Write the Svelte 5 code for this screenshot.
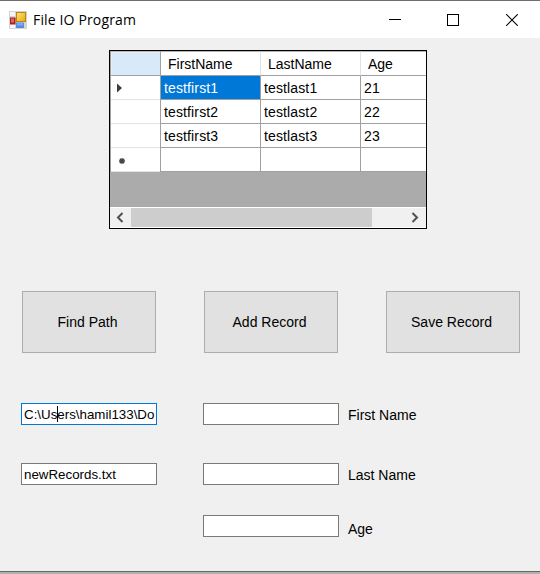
<script>
  const columns = ['FirstName', 'LastName', 'Age'];
  const records = [
    ['testfirst1', 'testlast1', '21'],
    ['testfirst2', 'testlast2', '22'],
    ['testfirst3', 'testlast3', '23'],
    ['', '', '']
  ];
  const actions = ['Find Path', 'Add Record', 'Save Record'];
</script>

<main class="window">
  <header class="titlebar">
    <svg class="logo" width="18" height="18" viewBox="0 0 18 18">
      <defs>
        <linearGradient id="gold" x1="0" y1="0" x2="1" y2="1"><stop offset="0" stop-color="#ffe487" /><stop offset="1" stop-color="#e8a800" /></linearGradient>
        <linearGradient id="blue" x1="0" y1="0" x2="0" y2="1"><stop offset="0" stop-color="#9cc2ff" /><stop offset="1" stop-color="#3c78e0" /></linearGradient>
      </defs>
      <rect width="18" height="18" fill="#d4d4d4" />
      <path d="M1 1H6V5H1ZM1 13H6V17H1Z" fill="#f6f6f6" />
      <rect x="1" y="6.5" width="5.5" height="7" fill="#a9211c" />
      <rect x="2" y="7.5" width="3" height="4" fill="#d56a5e" />
      <rect x="7.5" y="1.5" width="9" height="9" fill="url(#gold)" stroke="#b98512" />
      <rect x="7.5" y="12" width="7" height="4.5" fill="url(#blue)" stroke="#447fe0" stroke-width=".8" />
    </svg>
    <h1>File IO Program</h1>
    <svg class="controls" width="129" height="12" viewBox="0 0 129 12" fill="none" stroke="#000" shape-rendering="crispEdges">
      <path d="M0 5.5H12M58.5 .5H69.5V11.5H58.5Z" />
      <path d="M117.2 .2L128.8 11.8M128.8 .2L117.2 11.8" stroke-width="1.1" shape-rendering="auto" />
    </svg>
  </header>

  <section class="grid">
    <div class="sheet">
      <div class="row head">
        <div class="marker"></div>
        {#each columns as name}<div class="cell"><span>{name}</span></div>{/each}
      </div>
      {#each records as record, r}
        <div class="row">
          <div class="marker">
            {#if r === 0}
              <svg width="5" height="10" viewBox="0 0 5 10"><path d="M0 .5L5 5L0 9.5Z" fill="#3c3c3c" /></svg>
            {:else if r === 3}
              <svg class="star" width="6" height="6" viewBox="0 0 6 6"><path d="M3 0V6M0 3H6M.8 .8L5.2 5.2M5.2 .8L.8 5.2" stroke="#444" stroke-width="1.3" /></svg>
            {/if}
          </div>
          {#each record as value, c}
            <div class="cell" class:selected={r === 0 && c === 0}><span>{value}</span></div>
          {/each}
        </div>
      {/each}
    </div>
    <div class="scrollbar">
      <svg width="21" height="19" viewBox="0 0 21 19"><path d="M12.5 5L8 9.5L12.5 14" fill="none" stroke="#505050" stroke-width="2" /></svg>
      <div class="thumb"></div>
      <svg width="21" height="19" viewBox="0 0 21 19"><path d="M7.5 5L12 9.5L7.5 14" fill="none" stroke="#505050" stroke-width="2" /></svg>
    </div>
  </section>

  <section class="actions">
    {#each actions as label}<button type="button">{label}</button>{/each}
  </section>

  <section class="form">
    <div class="files">
      <div class="box focused">C:\Us<i class="caret"></i>ers\hamil133\Do</div>
      <div class="box">newRecords.txt</div>
    </div>
    <div class="fields">
      <label><input class="box" /><span>First Name</span></label>
      <label><input class="box" /><span>Last Name</span></label>
      <label class="age"><input class="box" /><span>Age</span></label>
    </div>
  </section>
</main>

<style>
  .window {
    box-sizing: border-box;
    width: 540px;
    height: 574px;
    overflow: hidden;
    display: flex;
    flex-direction: column;
    background: linear-gradient(#f0f0f0 571px, #666 571px, #666 572px, #b0b0b0 572px);
    color: #000;
    font: 14px/16px 'Liberation Sans', Arial, sans-serif;
  }
  .titlebar {
    box-sizing: border-box;
    height: 38px;
    flex: none;
    display: flex;
    align-items: center;
    padding: 0 22px 0 9px;
    border-top: 1px solid #6e6e6e;
    background: #fff;
  }
  h1 {
    margin: 1px 0 0 6px;
    font: 14px/20px 'Open Sans', sans-serif;
    letter-spacing: 0.15px;
  }
  .controls { margin-left: auto; flex: none; }
  .grid {
    box-sizing: border-box;
    width: 318px;
    height: 179px;
    flex: none;
    margin: 12px 0 0 109px;
    border: 1px solid #000;
    background: #ababab;
    display: flex;
    flex-direction: column;
    overflow: hidden;
  }
  .sheet { height: 156px; flex: none; }
  .row { display: flex; height: 24px; }
  .row.head { height: 25px; }
  .marker {
    box-sizing: border-box;
    width: 51px;
    flex: none;
    display: flex;
    align-items: center;
    padding-left: 6px;
    border: solid #a0a0a0;
    border-width: 0 1px 0 1px;
    background: linear-gradient(#e2e2e2, #e2e2e2) bottom / 100% 1px no-repeat #fff;
  }
  .star { margin: 1px 0 0 2px; }
  .head .marker {
    border-top: 1px solid #b5b5b5;
    border-bottom: 1px solid #a0a0a0;
    background: #d8eaf9;
    box-shadow: inset 1px 1px #e8eef3;
  }
  .cell {
    box-sizing: border-box;
    width: 100px;
    flex: none;
    padding: 4px 0 0 3px;
    border: solid #a0a0a0;
    border-width: 0 1px 1px 0;
    background: #fff;
    white-space: nowrap;
    letter-spacing: 0.13px;
  }
  .head .cell {
    padding: 4px 0 0 7px;
    border-top: 1px solid #b5b5b5;
    border-right-color: #e2e2e2;
    letter-spacing: 0;
  }
  .selected { background: #0078d7; color: #fff; }
  .scrollbar {
    box-sizing: border-box;
    height: 21px;
    display: flex;
    border: solid #fff;
    border-width: 1px 0;
    background: #f0f0f0;
  }
  .scrollbar svg { flex: none; }
  .thumb { width: 241px; margin-right: 33px; flex: none; background: #cdcdcd; }
  .actions {
    display: flex;
    gap: 48px;
    margin: 62px 0 0 22px;
  }
  button {
    box-sizing: border-box;
    width: 134px;
    height: 62px;
    flex: none;
    padding: 0 3px 1px 0;
    border: 1px solid #adadad;
    border-radius: 0;
    background: #e1e1e1;
    color: #000;
    font: inherit;
  }
  .form {
    display: flex;
    gap: 46px;
    margin: 50px 0 0 21px;
  }
  .files, .fields { display: flex; flex-direction: column; gap: 38px; }
  .box {
    box-sizing: border-box;
    width: 136px;
    height: 22px;
    flex: none;
    margin: 0;
    padding: 3px 0 0 2px;
    border: 1px solid #7a7a7a;
    border-radius: 0;
    outline: 0;
    background: #fff;
    font-size: 13.33px;
    white-space: nowrap;
  }
  .focused { border-color: #0078d7; }
  .caret {
    display: inline-block;
    width: 1px;
    height: 16px;
    margin: -1px -1px 0 0;
    vertical-align: top;
    background: #000;
  }
  label { display: flex; height: 22px; gap: 9px; }
  label span { padding-top: 4px; }
  .age { margin-top: -8px; }
  .age span { padding-top: 6px; }
</style>
